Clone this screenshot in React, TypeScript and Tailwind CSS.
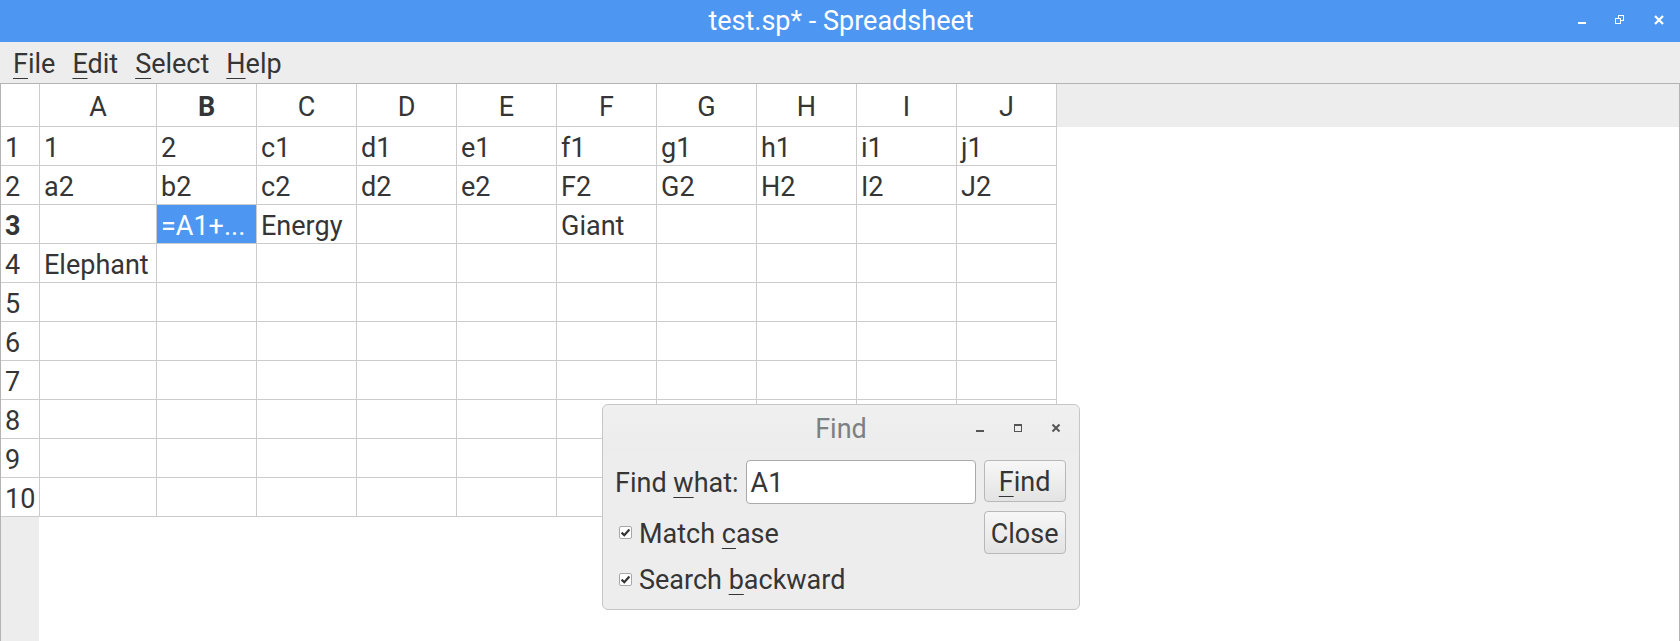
import { Fragment } from 'react'

const cols = ['A', 'B', 'C', 'D', 'E', 'F', 'G', 'H', 'I', 'J']

const data: string[][] = [
  ['1', '2', 'c1', 'd1', 'e1', 'f1', 'g1', 'h1', 'i1', 'j1'],
  ['a2', 'b2', 'c2', 'd2', 'e2', 'F2', 'G2', 'H2', 'I2', 'J2'],
  ['', '=A1+...', 'Energy', '', '', 'Giant', '', '', '', ''],
  ['Elephant', '', '', '', '', '', '', '', '', ''],
  ['', '', '', '', '', '', '', '', '', ''],
  ['', '', '', '', '', '', '', '', '', ''],
  ['', '', '', '', '', '', '', '', '', ''],
  ['', '', '', '', '', '', '', '', '', ''],
  ['', '', '', '', '', '', '', '', '', ''],
  ['', '', '', '', '', '', '', '', '', ''],
]

const selRow = 2
const selCol = 1

function Mnemonic({ before = '', letter, after = '' }: { before?: string; letter: string; after?: string }) {
  return (
    <span>
      {before}
      <span className="underline decoration-1 underline-offset-[5px]">{letter}</span>
      {after}
    </span>
  )
}

function Check() {
  return (
    <svg width="13" height="13" viewBox="0 0 13 13" className="shrink-0">
      <rect x="0.5" y="0.5" width="12" height="12" rx="1.5" fill="#ffffff" stroke="#a8a8a8" />
      <path d="M2.6 6.6 L5.3 9.2 L10.4 3.4" fill="none" stroke="#333333" strokeWidth="2.2" />
    </svg>
  )
}

export default function App() {
  return (
    <div className="w-[1680px] h-[641px] flex flex-col overflow-hidden bg-white text-[#353535] font-['Roboto',sans-serif] relative">
      {/* title bar */}
      <div className="h-[42px] bg-[#4d97f3] flex items-center relative shrink-0">
        <div className="flex-1 text-center text-white text-[27px] leading-none pl-[2px] pt-[1px]">test.sp* - Spreadsheet</div>
        <div className="absolute right-0 top-0 h-[42px] flex items-center">
          <svg width="10" height="10" viewBox="0 0 10 10" className="mr-[28px]">
            <rect x="1" y="6" width="8" height="2" fill="#ffffff" />
          </svg>
          <svg width="10" height="10" viewBox="0 0 10 10" className="mr-[29px] -mt-[2px]">
            <rect x="3.5" y="0.5" width="5" height="5" fill="none" stroke="#ffffff" />
            <rect x="0.5" y="3.5" width="5" height="5" fill="#4d97f3" stroke="#ffffff" />
          </svg>
          <svg width="10" height="10" viewBox="0 0 10 10" className="mr-[16px] -mt-[2px]">
            <path d="M1 1 L9 9 M9 1 L1 9" stroke="#ffffff" strokeWidth="2.2" />
          </svg>
        </div>
      </div>

      {/* menu bar */}
      <div className="h-[41px] bg-[#ededed] flex items-center text-[27px] pl-[13px] gap-[17px] shrink-0 pt-[3px]">
        <Mnemonic letter="F" after="ile" />
        <Mnemonic letter="E" after="dit" />
        <Mnemonic letter="S" after="elect" />
        <Mnemonic letter="H" after="elp" />
      </div>

      {/* sheet */}
      <div className="flex-1 flex border-t border-l border-r border-[#b4b4b4] min-h-0">
        <div className="flex flex-col">
          <div className="grid grid-cols-[39px_117px_repeat(9,100px)] grid-rows-[43px_repeat(10,39px)] text-[27px]">
            <div className="border-r border-b border-[#cccccc] bg-white" />
            {cols.map((c, i) => (
              <div
                key={c}
                className={`border-r border-b border-[#cccccc] bg-white flex items-center justify-center pt-[5px] ${i === selCol ? 'font-bold' : ''}`}
              >
                {c}
              </div>
            ))}
            {data.map((row, r) => (
              <Fragment key={r}>
                <div className={`border-r border-b border-[#cccccc] bg-white flex items-center pl-[4px] pt-[5px] ${r === selRow ? 'font-bold' : ''}`}>
                  {r + 1}
                </div>
                {row.map((v, c) =>
                  r === selRow && c === selCol ? (
                    <div key={c} className="border-r border-b border-[#cccccc] bg-[#4d97f3] text-white flex items-center pl-[4px] pt-[5px] whitespace-nowrap overflow-hidden">
                      {v}
                    </div>
                  ) : (
                    <div key={c} className="border-r border-b border-[#cccccc] bg-white flex items-center pl-[4px] pt-[5px] whitespace-nowrap overflow-hidden">
                      {v}
                    </div>
                  )
                )}
              </Fragment>
            ))}
          </div>
          <div className="flex-1 flex">
            <div className="w-[38px] bg-[#ededed]" />
            <div className="flex-1 bg-white" />
          </div>
        </div>
        <div className="flex-1 flex flex-col">
          <div className="h-[43px] bg-[#ededed]" />
          <div className="flex-1 bg-white" />
        </div>
      </div>

      {/* Find dialog */}
      <div className="absolute left-[602px] top-[404px] w-[478px] h-[206px] bg-[#ededed] border border-[#c6c6c6] rounded-[6px] flex flex-col text-[27px]">
        <div className="h-[46px] grid grid-cols-[1fr_auto_1fr] items-center bg-gradient-to-b from-[#f0f0f0] to-[#ececec] rounded-t-[6px]">
          <div />
          <div className="text-[#7d7f84] text-[27px] leading-none pt-[2px]">Find</div>
          <div className="flex items-center justify-end pr-[17px] gap-[26px]">
            <svg width="12" height="12" viewBox="0 0 12 12">
              <rect x="2" y="8" width="8" height="2" fill="#555555" />
            </svg>
            <svg width="12" height="12" viewBox="0 0 12 12">
              <rect x="2.5" y="2.5" width="7" height="7" fill="none" stroke="#555555" />
              <rect x="2" y="2" width="8" height="2" fill="#555555" />
            </svg>
            <svg width="12" height="12" viewBox="0 0 12 12">
              <path d="M2.5 2.5 L9.5 9.5 M9.5 2.5 L2.5 9.5" stroke="#555555" strokeWidth="2" />
            </svg>
          </div>
        </div>
        <div className="flex pl-[12px] pt-[9px] gap-[8px]">
          <div className="flex flex-col">
            <div className="flex items-center h-[44px]">
              <span className="mr-[7px] pt-[3px]">
                <Mnemonic before="Find " letter="w" after="hat:" />
              </span>
              <div className="w-[230px] h-[44px] bg-white border border-[#a9a9a9] rounded-[4px] flex items-center pl-[4px] pt-[3px] text-[27px]">
                A1
              </div>
            </div>
            <div className="h-[43px] mt-[7px] flex items-center gap-[7px] pl-[4px]">
              <Check />
              <span className="pt-[3px]">
                <Mnemonic before="Match " letter="c" after="ase" />
              </span>
            </div>
            <div className="h-[44px] mt-[3px] flex items-center gap-[7px] pl-[4px]">
              <Check />
              <span className="pt-[3px]">
                <Mnemonic before="Search " letter="b" after="ackward" />
              </span>
            </div>
          </div>
          <div className="flex flex-col">
            <button className="w-[82px] h-[42px] border border-[#b8b8b8] rounded-[4px] bg-gradient-to-b from-[#f7f7f7] to-[#e3e3e3] text-[27px] text-[#353535] flex items-center justify-center pt-[3px]">
              <Mnemonic letter="F" after="ind" />
            </button>
            <button className="w-[82px] h-[43px] mt-[9px] border border-[#b8b8b8] rounded-[4px] bg-gradient-to-b from-[#f7f7f7] to-[#e3e3e3] text-[27px] text-[#353535] flex items-center justify-center pt-[3px]">
              Close
            </button>
          </div>
        </div>
      </div>
    </div>
  )
}
